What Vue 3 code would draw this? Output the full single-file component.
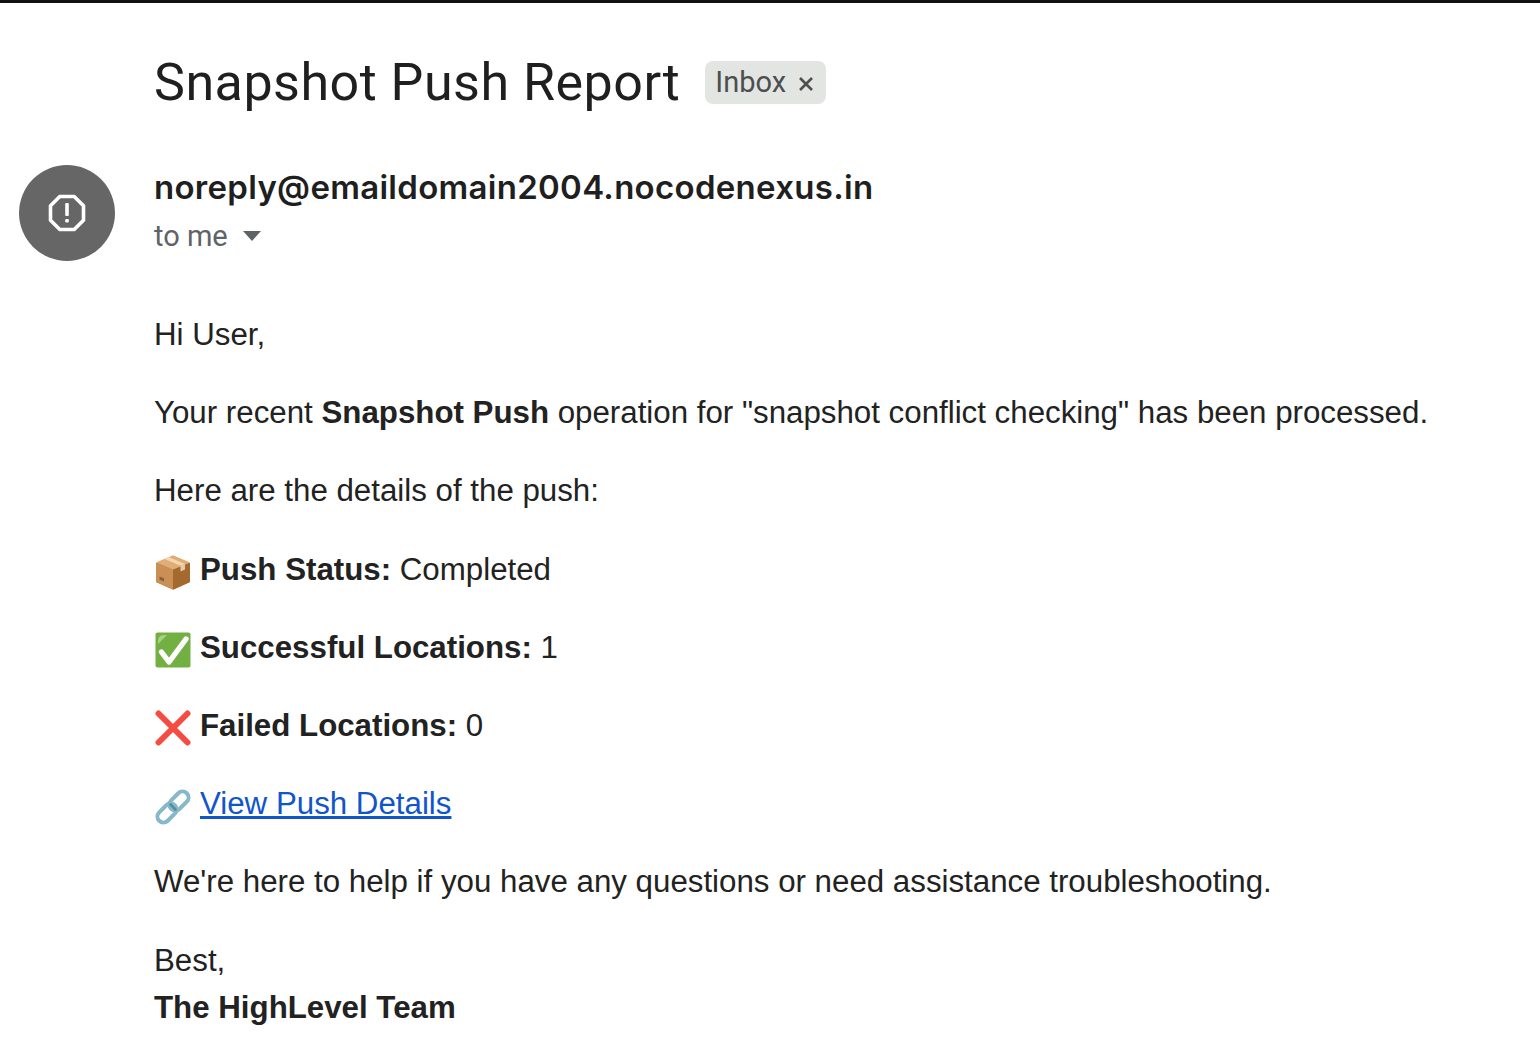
<template>
  <div class="page">
    <div class="title-row">
      <h1 class="subject">Snapshot Push Report</h1>
      <span class="label">
        Inbox
        <svg class="label-x" viewBox="0 0 16 16" width="16" height="16">
          <path d="M2 2 14 14M14 2 2 14" fill="none" stroke="#4c4f4f" stroke-width="2.6" />
        </svg>
      </span>
    </div>

    <div class="sender">
      <div class="avatar">
        <svg viewBox="0 0 38 38" width="38" height="38">
          <path
            d="M11.8 2.5h14.4L35.5 11.8v14.4L26.2 35.5H11.8L2.5 26.2V11.8z"
            fill="none"
            stroke="#fff"
            stroke-width="3.6"
            stroke-linejoin="round"
          />
          <rect x="17.2" y="9" width="3.6" height="13" rx="1" fill="#fff" />
          <rect x="17.2" y="25" width="3.6" height="3.6" rx="1" fill="#fff" />
        </svg>
      </div>
      <div class="sender-info">
        <div class="address">noreply@emaildomain2004.nocodenexus.in</div>
        <div class="recipient">
          to me
          <svg class="caret" viewBox="0 0 18 10" width="18" height="10">
            <path d="M0 0h18L9 10z" fill="#5f6368" />
          </svg>
        </div>
      </div>
    </div>

    <div class="body">
      <p>Hi User,</p>
      <p>Your recent <b>Snapshot Push</b> operation for "snapshot conflict checking" has been processed.</p>
      <p>Here are the details of the push:</p>

      <p class="item">
        <svg class="emoji" viewBox="0 0 36 36">
          <path d="M18 1.5 34 8.5Q35 9 35 10V27Q35 28 34 28.5L18.5 35.5H17.5L2 28.5Q1 28 1 27V10Q1 9 2 8.5Z" fill="#b97c42" />
          <path d="M18 15.5 35 9V27Q35 28 34 28.5L18.5 35.5H18Z" fill="#a3692f" />
          <path d="M1 9 18 15.5V35.5L2 28.5Q1 28 1 27Z" fill="#c98f55" />
          <path d="M18 1.5 35 8.5 18 15.5 1 8.5Z" fill="#e0ad76" />
          <path d="M9 4.8 25.5 11.8l4.5-1.8L13.5 3Z" fill="#f3d6ad" />
          <path d="M25.5 11.8l4.5-1.8v5.6l-4.5 1.8Z" fill="#e6cba7" />
          <path d="M4.5 22.5l4.5 1.8v3.2l-4.5-1.8Z" fill="#8d5f36" />
        </svg>
        <span><b>Push Status:</b> Completed</span>
      </p>

      <p class="item">
        <svg class="emoji" viewBox="0 0 36 36">
          <rect x="0.5" y="0.5" width="35" height="35" rx="2" fill="#72b043" />
          <path d="M3 9Q3 3 9 3h3L3 12Z" fill="#a5d27e" />
          <path d="M6.5 20 14 30 31 7" fill="none" stroke="#fff" stroke-width="5.4" stroke-linecap="round" stroke-linejoin="round" />
        </svg>
        <span><b>Successful Locations:</b> 1</span>
      </p>

      <p class="item">
        <svg class="emoji" viewBox="0 0 36 36">
          <path d="M3.5 3.5 32.5 32.5M32.5 3.5 3.5 32.5" stroke="#f44b42" stroke-width="6" stroke-linecap="round" />
        </svg>
        <span><b>Failed Locations:</b> 0</span>
      </p>

      <p class="item">
        <svg class="emoji" viewBox="0 0 36 36">
          <g fill="none" stroke="#86b8c8" stroke-width="4">
            <rect x="-11" y="-6" width="22" height="12" rx="6" transform="translate(24 12) rotate(-45)" />
            <rect x="-11" y="-6" width="22" height="12" rx="6" transform="translate(12 24) rotate(-45)" />
          </g>
          <path d="M15.5 15.5l2 2M18.5 18.5l2 2" stroke="#4f8fa3" stroke-width="2.6" stroke-linecap="round" />
        </svg>
        <a class="link" href="#">View Push Details</a>
      </p>

      <p>We're here to help if you have any questions or need assistance troubleshooting.</p>
      <p>Best,<br /><b>The HighLevel Team</b></p>
    </div>
  </div>
</template>

<script setup>
</script>

<style>
html,
body {
  margin: 0;
  background: #fff;
}
</style>

<style scoped>
.page {
  box-sizing: border-box;
  height: 1058px;
  overflow: hidden;
  border-top: 3px solid #111;
  padding: 46px 0 0 19px;
  color: #222;
  font-family: "Liberation Sans", Arial, sans-serif;
}

.title-row {
  display: flex;
  align-items: center;
  gap: 25px;
  margin-left: 135px;
  height: 66px;
}

.subject {
  margin: 0;
  font-family: Roboto, sans-serif;
  font-size: 52px;
  font-weight: 400;
  letter-spacing: 0.5px;
  color: #1f1f1f;
  white-space: nowrap;
}

.label {
  display: flex;
  align-items: center;
  gap: 12px;
  height: 43px;
  padding: 0 12px 0 10px;
  border-radius: 8px;
  background: #e3e5e3;
  color: #4c4f4f;
  font-family: Roboto, sans-serif;
  font-size: 29px;
}

.label-x {
  margin-top: 3px;
}

.sender {
  display: flex;
  gap: 39px;
  margin-top: 50px;
}

.avatar {
  display: flex;
  align-items: center;
  justify-content: center;
  flex: none;
  width: 96px;
  height: 96px;
  border-radius: 50%;
  background: #666;
}

.address {
  margin-top: 2px;
  font-family: Inter, sans-serif;
  font-size: 33px;
  font-weight: 600;
  letter-spacing: 0.29px;
  line-height: 40px;
  color: #1f1f1f;
  white-space: nowrap;
}

.recipient {
  display: flex;
  align-items: center;
  gap: 15px;
  margin-top: 9px;
  font-family: Roboto, sans-serif;
  font-size: 29px;
  line-height: 40px;
  color: #5f6368;
}

.body {
  margin: 50px 0 0 135px;
  font-size: 31.28px;
  line-height: 47px;
  color: #222;
}

.body p {
  margin: 0 0 31.2px;
  white-space: nowrap;
}

.item {
  display: flex;
  align-items: center;
  gap: 10px;
}

.emoji {
  flex: none;
  width: 36px;
  height: 36px;
  margin: 6px 0 0 0.5px;
  margin-right: -0.5px;
}

.link {
  color: #1155cc;
}
</style>
